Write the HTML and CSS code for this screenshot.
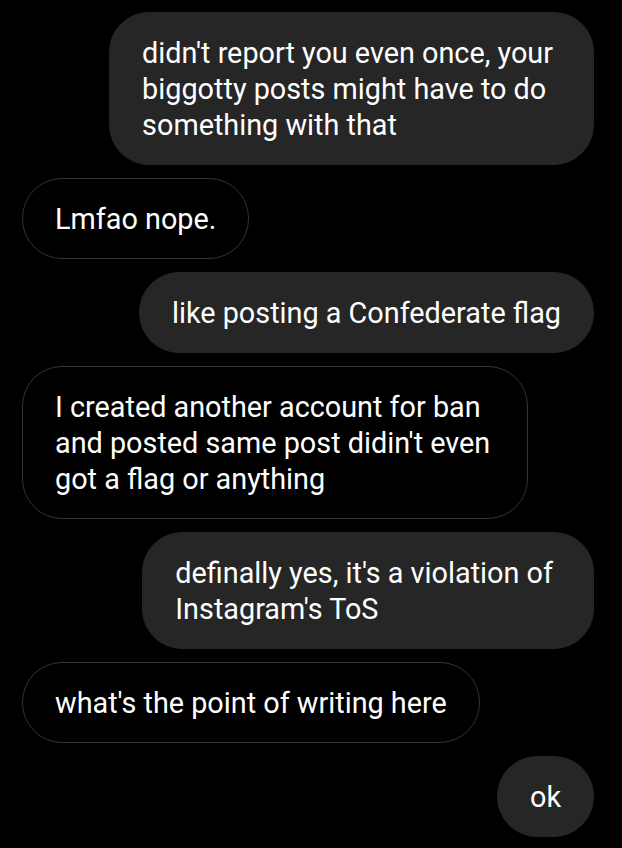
FILE: index.html
```html
<!DOCTYPE html>
<html>
<head>
<meta charset="utf-8">
<link rel="stylesheet" href="styles.css">
</head>
<body>
<div class="chat">
  <div class="msg sent wrap-wide">didn't report you even once, your<br>biggotty posts might have to do<br>something with that</div>
  <div class="msg recv">Lmfao nope.</div>
  <div class="msg sent">like posting a Confederate flag</div>
  <div class="msg recv wrap-mid">I created another account for ban<br>and posted same post didin't even<br>got a flag or anything</div>
  <div class="msg sent wrap-wide">definally yes, it's a violation of<br>Instagram's ToS</div>
  <div class="msg recv">what's the point of writing here</div>
  <div class="msg sent">ok</div>
</div>
</body>
</html>
```

FILE: styles.css
```css
html, body {
  margin: 0;
  padding: 0;
  background: #000;
}
body {
  width: 622px;
  height: 848px;
  overflow: hidden;
  font-family: Roboto, "Noto Sans", sans-serif;
  color: #fff;
}
.chat {
  display: flex;
  flex-direction: column;
  gap: 13px;
  padding: 12px 28px 0 22px;
}
.msg {
  width: fit-content;
  box-sizing: border-box;
  font-size: 28.8px;
  line-height: 36px;
  padding: 21.5px 32px;
  border-radius: 40px;
  border: 1px solid transparent;
  white-space: nowrap;
}
.wrap-wide {
  padding-right: 40px;
}
.wrap-mid {
  padding-right: 37px;
}
.sent {
  align-self: flex-end;
  background: #262626;
  border-color: #262626;
}
.recv {
  align-self: flex-start;
  background: #000;
  border-color: #333;
}
```
